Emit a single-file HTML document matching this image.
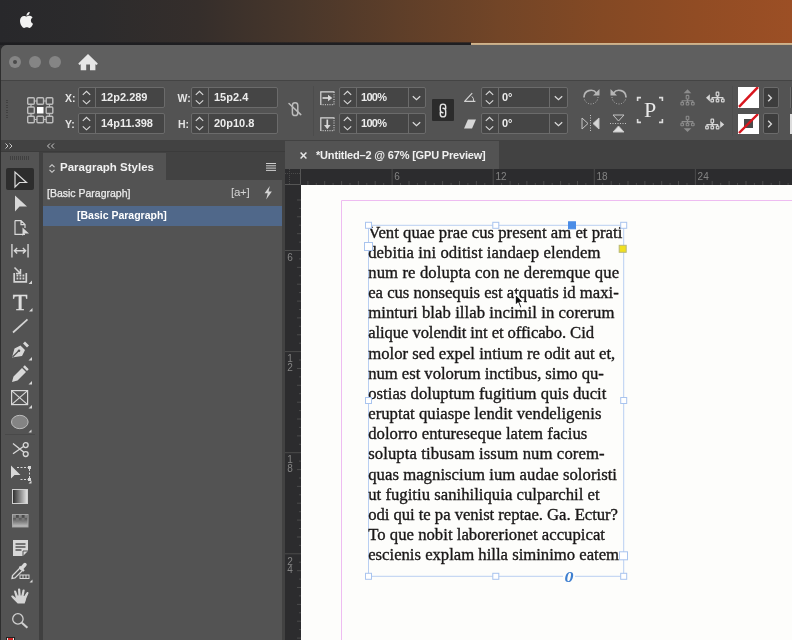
<!DOCTYPE html>
<html><head><meta charset="utf-8">
<style>
*{box-sizing:border-box;margin:0;padding:0}
html,body{width:792px;height:640px;overflow:hidden;background:#2b2b2d;font-family:"Liberation Sans",sans-serif;}
body{position:relative}
.a{position:absolute}
#desk{left:0;top:0;width:792px;height:45px;background:linear-gradient(to right,#28282b 0%,#2c2b2c 12%,#352e2b 25%,#49372b 38%,#5d3e29 50%,#724527 63%,#844924 76%,#914c24 88%,#9c4f25 100%);}
#ln1{left:0;top:42px;width:471px;height:3px;background:linear-gradient(to bottom,rgba(28,28,31,0.3),#1e1e21 34%,#1e1e21)}
#ln2{left:471px;top:43px;width:321px;height:2px;background:linear-gradient(to bottom,#d4b78e,#bfa684)}
#win{left:1px;top:45px;width:791px;height:595px;background:#535353;border-top-left-radius:6px;}
#title{left:1px;top:45px;width:791px;height:35px;background:#5f5f5f;border-top-left-radius:6px}
#ctrlline{left:1px;top:80px;width:791px;height:1px;background:#444}
#ctrl{left:1px;top:81px;width:791px;height:59px;background:#535353}
#strip{left:1px;top:140px;width:284px;height:11px;background:#3d3d3d}
.tl{width:12px;height:12px;border-radius:6px;background:#858585;top:56px}
.fld{position:absolute;height:21px;background:#454545;border:1px solid #6b6b6b;border-radius:2px;}
.fld i{position:absolute;top:0;width:1px;height:19px;background:#6b6b6b}
.fld b{position:absolute;top:0;left:0;color:#ececec;font-size:11px;font-weight:bold;line-height:19px;white-space:nowrap;transform:translateY(0.450px) scaleY(0.940);transform-origin:50% 50%}
.lbl{position:absolute;color:#e4e4e4;font-size:10.500px;font-weight:bold;line-height:21px;white-space:nowrap}
svg{position:absolute;overflow:visible}
</style></head><body><div id="root" style="position:absolute;left:0;top:0;width:792px;height:640px;will-change:transform">
<div id="desk" class="a"></div>
<div id="ln1" class="a"></div><div id="ln2" class="a"></div>
<div id="win" class="a"></div><div class="a" style="left:0;top:48px;width:1px;height:592px;background:#2e2e2e"></div>
<div id="title" class="a"></div>
<div id="ctrlline" class="a"></div>
<div id="ctrl" class="a"></div>
<!--APPLE-->
<!--TITLEBAR-->
<div class="a tl" style="left:9px"></div><div class="a" style="left:13px;top:60px;width:4px;height:4px;border-radius:2px;background:#4a4a4a"></div>
<div class="a tl" style="left:29px"></div>
<div class="a tl" style="left:49px"></div>

<!-- apple logo -->
<svg class="a" style="left:20px;top:12px" width="13" height="16" viewBox="0 0 814 1000"><path fill="#f2f2f2" d="M788.1 340.9c-5.8 4.5-108.2 62.2-108.2 190.5 0 148.4 130.3 200.9 134.2 202.200-.6 3.200-20.700 71.900-68.700 141.900-42.800 61.600-87.500 123.100-155.500 123.100s-85.500-39.500-164-39.500c-76.500 0-103.700 40.800-165.900 40.800s-105.600-57-155.500-127C46.700 790.700 0 663 0 541.800c0-194.400 126.400-297.500 250.800-297.500 66.100 0 121.200 43.400 162.700 43.400 39.500 0 101.100-46 176.300-46 28.500 0 130.900 2.600 198.300 99.200zm-234-181.500c31.100-36.900 53.100-88.100 53.100-139.300 0-7.100-.6-14.300-1.900-20.100-50.600 1.900-110.800 33.700-147.100 75.800-28.500 32.400-55.100 83.600-55.100 135.500 0 7.800 1.300 15.600 1.900 18.100 3.200.6 8.400 1.300 13.600 1.300 45.400 0 102.500-30.400 135.500-71.300z"/></svg>
<!-- home icon -->
<svg class="a" style="left:0;top:0" width="120" height="80" viewBox="0 0 120 80"><path fill="#e6e6e6" d="M88 54 L78.300 63.400 L79.300 64.900 L80.700 64.300 V70.300 H86.200 V64.400 H90 V70.300 H95.400 V64.300 L96.800 64.900 L97.800 63.400 Z"/></svg>
<!-- grip -->
<div class="a" style="left:6px;top:100px;width:2px;height:20px;background:repeating-linear-gradient(to bottom,#404040 0,#404040 1px,transparent 1px,transparent 2.500px)"></div>
<!-- reference point grid -->
<svg class="a" style="left:27px;top:96.700px" width="26.500" height="26.500" viewBox="0 0 26.500 26.500" fill="none" stroke="#bdbdbd" stroke-width="1.400">
<rect x="0.700" y="0.700" width="6.600" height="6.600" rx="1"/><rect x="9.950" y="0.700" width="6.600" height="6.600" rx="1"/><rect x="19.200" y="0.700" width="6.600" height="6.600" rx="1"/>
<rect x="0.700" y="9.950" width="6.600" height="6.600" rx="1"/><rect x="19.200" y="9.950" width="6.600" height="6.600" rx="1"/>
<rect x="0.700" y="19.200" width="6.600" height="6.600" rx="1"/><rect x="9.950" y="19.200" width="6.600" height="6.600" rx="1"/><rect x="19.200" y="19.200" width="6.600" height="6.600" rx="1"/>
<path d="M7.300 4 H10 M16.500 4 H19.200 M7.300 22.500 H10 M16.500 22.500 H19.200 M4 7.300 V10 M4 16.500 V19.200 M22.500 7.300 V10 M22.500 16.500 V19.200" stroke-width="1.200"/>
<rect x="10" y="10" width="6.500" height="6.500" fill="#ffffff" stroke="none"/>
</svg>
<!-- X Y W H -->
<div class="lbl" style="left:65px;top:88px">X:</div>
<div class="lbl" style="left:65px;top:114px">Y:</div>
<div class="lbl" style="left:177.500px;top:88px">W:</div>
<div class="lbl" style="left:178px;top:114px">H:</div>
<div class="fld" style="left:78px;top:87px;width:87px"><i style="left:16px"></i><b style="left:22px">12p2.289</b><svg class="st" width="9" height="15" style="left:3px;top:2px" viewBox="0 0 9 15" fill="none" stroke="#dadada" stroke-width="1.150"><path d="M0.800 4.800 L4.500 1.400 L8.200 4.800 M0.800 10.400 L4.500 13.800 L8.200 10.400"/></svg></div>
<div class="fld" style="left:78px;top:113px;width:87px"><i style="left:16px"></i><b style="left:22px">14p11.398</b><svg class="st" width="9" height="15" style="left:3px;top:2px" viewBox="0 0 9 15" fill="none" stroke="#dadada" stroke-width="1.150"><path d="M0.800 4.800 L4.500 1.400 L8.200 4.800 M0.800 10.400 L4.500 13.800 L8.200 10.400"/></svg></div>
<div class="fld" style="left:191px;top:87px;width:87px"><i style="left:16px"></i><b style="left:22px">15p2.4</b><svg class="st" width="9" height="15" style="left:3px;top:2px" viewBox="0 0 9 15" fill="none" stroke="#dadada" stroke-width="1.150"><path d="M0.800 4.800 L4.500 1.400 L8.200 4.800 M0.800 10.400 L4.500 13.800 L8.200 10.400"/></svg></div>
<div class="fld" style="left:191px;top:113px;width:87px"><i style="left:16px"></i><b style="left:22px">20p10.8</b><svg class="st" width="9" height="15" style="left:3px;top:2px" viewBox="0 0 9 15" fill="none" stroke="#dadada" stroke-width="1.150"><path d="M0.800 4.800 L4.500 1.400 L8.200 4.800 M0.800 10.400 L4.500 13.800 L8.200 10.400"/></svg></div>
<!-- broken chain -->
<svg class="a" style="left:0;top:0" width="340" height="140" viewBox="0 0 340 140" fill="none" stroke="#bcbcbc" stroke-width="1.500" stroke-linecap="round"><rect x="292.400" y="102.800" width="5.400" height="12.800" rx="2.700"/><path d="M289 103.500 L300.800 114.600"/></svg>
<!-- scale icons -->
<svg class="a" style="left:0;top:0" width="340" height="140" viewBox="0 0 340 140" fill="none" stroke="#d8d8d8" stroke-width="1.200"><path d="M320.800 105 V91.900 H334.500"/><path d="M334 92 V104.600 H321" stroke-dasharray="1 1.300" stroke="#c4c4c4"/><path d="M322.500 98 H329" stroke-width="1.700"/><path d="M328 94.800 L332.300 98 L328 101.200 Z" fill="#d8d8d8" stroke="none"/>
<path d="M320.800 131 V117.800 H334.500"/><path d="M334 118 V130.600 H321" stroke-dasharray="1 1.300" stroke="#c4c4c4"/><path d="M327.300 119.500 V126" stroke-width="1.700"/><path d="M324 125 L327.300 129.300 L330.600 125 Z" fill="#d8d8d8" stroke="none"/></svg>
<div class="a" style="left:313px;top:86px;width:1px;height:50px;background:#4c4c4c"></div>
<div class="fld" style="left:339px;top:87px;width:87px"><i style="left:16px"></i><i style="left:68px"></i><b style="left:21px;letter-spacing:-0.700px">100%</b><svg class="st" width="9" height="15" style="left:3px;top:2px" viewBox="0 0 9 15" fill="none" stroke="#dadada" stroke-width="1.150"><path d="M0.800 4.800 L4.500 1.400 L8.200 4.800 M0.800 10.400 L4.500 13.800 L8.200 10.400"/></svg><svg width="9" height="6" style="left:72px;top:7px" viewBox="0 0 9 6" fill="none" stroke="#dadada" stroke-width="1.250"><path d="M0.800 1.200 L4.500 4.700 L8.200 1.200"/></svg></div>
<div class="fld" style="left:339px;top:113px;width:87px"><i style="left:16px"></i><i style="left:68px"></i><b style="left:21px;letter-spacing:-0.700px">100%</b><svg class="st" width="9" height="15" style="left:3px;top:2px" viewBox="0 0 9 15" fill="none" stroke="#dadada" stroke-width="1.150"><path d="M0.800 4.800 L4.500 1.400 L8.200 4.800 M0.800 10.400 L4.500 13.800 L8.200 10.400"/></svg><svg width="9" height="6" style="left:72px;top:7px" viewBox="0 0 9 6" fill="none" stroke="#dadada" stroke-width="1.250"><path d="M0.800 1.200 L4.500 4.700 L8.200 1.200"/></svg></div>
<!-- chain button -->
<div class="a" style="left:432px;top:99px;width:22px;height:22px;background:#2b2b2b;border-radius:1px"></div>
<svg class="a" style="left:0;top:0" width="480" height="140" viewBox="0 0 480 140" fill="none" stroke="#e4e4e4" stroke-width="1.400" stroke-linecap="round"><path d="M445.700 108.800 V106.800 A2.700 2.700 0 0 0 440.300 106.800 V110 A2.700 2.700 0 0 0 443 112.700"/><path d="M440.300 112.200 V114.200 A2.700 2.700 0 0 0 445.700 114.200 V111 A2.700 2.700 0 0 0 443 108.300"/></svg>
<!-- rotation / shear icons -->
<svg class="a" style="left:0;top:0" width="480" height="140" viewBox="0 0 480 140" fill="none" stroke="#d2d2d2" stroke-width="1.200" stroke-linejoin="round"><path d="M472.200 93.200 L464.600 101.300 H475.400"/><path d="M471.900 96.400 A5 5 0 0 1 473.500 101" stroke-width="1"/></svg>
<svg class="a" style="left:464px;top:119px" width="12" height="10" viewBox="0 0 12 10"><path fill="#d6d6d6" d="M4 0.500 H12 L8 9.500 H0 Z"/></svg>
<div class="fld" style="left:481px;top:87px;width:87px"><i style="left:16px"></i><i style="left:67px"></i><b style="left:20px">0°</b><svg class="st" width="9" height="15" style="left:3px;top:2px" viewBox="0 0 9 15" fill="none" stroke="#dadada" stroke-width="1.150"><path d="M0.800 4.800 L4.500 1.400 L8.200 4.800 M0.800 10.400 L4.500 13.800 L8.200 10.400"/></svg><svg width="9" height="6" style="left:72px;top:7px" viewBox="0 0 9 6" fill="none" stroke="#dadada" stroke-width="1.250"><path d="M0.800 1.200 L4.500 4.700 L8.200 1.200"/></svg></div>
<div class="fld" style="left:481px;top:113px;width:87px"><i style="left:16px"></i><i style="left:67px"></i><b style="left:20px">0°</b><svg class="st" width="9" height="15" style="left:3px;top:2px" viewBox="0 0 9 15" fill="none" stroke="#dadada" stroke-width="1.150"><path d="M0.800 4.800 L4.500 1.400 L8.200 4.800 M0.800 10.400 L4.500 13.800 L8.200 10.400"/></svg><svg width="9" height="6" style="left:72px;top:7px" viewBox="0 0 9 6" fill="none" stroke="#dadada" stroke-width="1.250"><path d="M0.800 1.200 L4.500 4.700 L8.200 1.200"/></svg></div>
<!-- rotate cw/ccw -->
<svg class="a" style="left:582px;top:88px" width="18" height="18" viewBox="0 0 18 18" fill="none" stroke="#b6b6b6" stroke-width="1.700"><path d="M14.500 5 A7 7 0 0 0 2 9"/><path d="M2 9 A7 7 0 0 0 16 9" stroke-dasharray="1 1.600" stroke-width="1"/><path d="M17.500 1 V7.500 H11 Z" fill="#b6b6b6" stroke="none"/></svg>
<svg class="a" style="left:610px;top:88px" width="18" height="18" viewBox="0 0 18 18" fill="none" stroke="#b6b6b6" stroke-width="1.700"><path d="M3.500 5 A7 7 0 0 1 16 9"/><path d="M16 9 A7 7 0 0 1 2 9" stroke-dasharray="1 1.600" stroke-width="1"/><path d="M0.500 1 V7.500 H7 Z" fill="#b6b6b6" stroke="none"/></svg>
<!-- flip h / v -->
<svg class="a" style="left:581px;top:115px" width="19" height="17" viewBox="0 0 19 17" fill="none" stroke="#c4c4c4" stroke-width="1"><path d="M1 3 V14 L7 8.500 Z"/><path d="M18 3 V14 L12 8.500 Z" fill="#d6d6d6"/><path d="M9.500 0 V17" stroke-dasharray="1 1.500"/></svg>
<svg class="a" style="left:610px;top:114px" width="17" height="19" viewBox="0 0 17 19" fill="none" stroke="#c4c4c4" stroke-width="1"><path d="M3 1 H14 L8.500 7 Z"/><path d="M3 18 H14 L8.500 12 Z" fill="#e0e0e0"/><path d="M0 9.500 H17" stroke-dasharray="1 1.500"/></svg>
<!-- P brackets -->
<svg class="a" style="left:637px;top:97px" width="26" height="26" viewBox="0 0 26 26" fill="none" stroke="#dcdcdc" stroke-width="1.600"><path d="M0.600 4 V0.600 H4 M22 0.600 H25.400 V4 M25.400 22 V25.400 H22 M4 25.400 H0.600 V22"/></svg>
<div class="a" style="left:641px;top:98px;width:18px;height:24px;font-family:'Liberation Serif',serif;font-size:22px;line-height:24px;color:#e8e8e8;text-align:center">P</div>
<!-- hierarchy icons -->
<svg class="a" style="left:0;top:0" width="792" height="140" viewBox="0 0 792 140"><g fill="none" stroke="#8c8c8c" stroke-width="1.1"><rect x="686.2" y="95.4" width="2.600" height="3.600" rx="0.600"/><path d="M687.5 99.0 V102.4 M682.2 102.4 V100.8 H692.8 V102.4"/><rect x="680.9" y="102.4" width="2.600" height="2.600" rx="0.600"/><rect x="686.2" y="102.4" width="2.600" height="2.600" rx="0.600"/><rect x="691.5" y="102.4" width="2.600" height="2.600" rx="0.600"/></g><path d="M687.500 89.200 L691.300 93.200 H683.700 Z" fill="#8c8c8c"/><g fill="none" stroke="#8c8c8c" stroke-width="1.1"><rect x="686.2" y="116.2" width="2.600" height="3.600" rx="0.600"/><path d="M687.5 119.8 V123.2 M682.2 123.2 V121.6 H692.8 V123.2"/><rect x="680.9" y="123.2" width="2.600" height="2.600" rx="0.600"/><rect x="686.2" y="123.2" width="2.600" height="2.600" rx="0.600"/><rect x="691.5" y="123.2" width="2.600" height="2.600" rx="0.600"/></g><path d="M687.500 132 L691.300 128.200 H683.700 Z" fill="#8c8c8c"/><g fill="none" stroke="#d6d6d6" stroke-width="1.2"><rect x="716.2" y="92.2" width="2.600" height="3.600" rx="0.600"/><path d="M717.5 95.8 V99.2 M712.2 99.2 V97.6 H722.8 V99.2"/><rect x="710.9" y="99.2" width="2.600" height="2.600" rx="0.600"/><rect x="716.2" y="99.2" width="2.600" height="2.600" rx="0.600"/><rect x="721.5" y="99.2" width="2.600" height="2.600" rx="0.600"/></g><path d="M706 97.800 L709.900 94.200 V101.400 Z" fill="#d6d6d6"/><g fill="none" stroke="#d6d6d6" stroke-width="1.2"><rect x="711.0" y="119.2" width="2.600" height="3.600" rx="0.600"/><path d="M712.3 122.8 V126.2 M707.0 126.2 V124.6 H717.6 V126.2"/><rect x="705.7" y="126.2" width="2.600" height="2.600" rx="0.600"/><rect x="711.0" y="126.2" width="2.600" height="2.600" rx="0.600"/><rect x="716.3" y="126.2" width="2.600" height="2.600" rx="0.600"/></g><path d="M724.200 124.400 L720.200 120.900 V127.900 Z" fill="#d6d6d6"/></svg>
<!-- fill / stroke swatches -->
<div class="a" style="left:738px;top:87px;width:21px;height:21px;background:#fff;overflow:hidden"><svg width="21" height="21" viewBox="0 0 21 20" preserveAspectRatio="none" style="left:0;top:0"><path d="M1 19 L20 0" stroke="#d8161e" stroke-width="2.400"/></svg></div>
<div class="a" style="left:763px;top:87px;width:16px;height:21px;background:#3d3d3d;border:1px solid #6b6b6b;border-radius:2px"></div>
<svg class="a" style="left:767px;top:93.500px" width="5.600" height="8" viewBox="0 0 7 10" fill="none" stroke="#d8d8d8" stroke-width="1.700"><path d="M1.500 1 L5.500 5 L1.500 9"/></svg>
<div class="a" style="left:738px;top:114px;width:21px;height:20px;background:#fff;overflow:hidden"><div class="a" style="left:6px;top:5px;width:9px;height:9px;background:#4a4a4a"></div><svg width="21" height="20" viewBox="0 0 21 20" style="left:0;top:0"><path d="M1 19 L20 0" stroke="#d8161e" stroke-width="2.400"/></svg></div>
<div class="a" style="left:763px;top:113px;width:16px;height:21px;background:#3d3d3d;border:1px solid #6b6b6b;border-radius:2px"></div>
<svg class="a" style="left:767px;top:119.500px" width="5.600" height="8" viewBox="0 0 7 10" fill="none" stroke="#d8d8d8" stroke-width="1.700"><path d="M1.500 1 L5.500 5 L1.500 9"/></svg>
<div class="a" style="left:790px;top:87px;width:2px;height:21px;background:#454545;border-left:1px solid #6b6b6b"></div>
<div class="a" style="left:790px;top:114px;width:2px;height:20px;background:#dcdcdc"></div>
<!-- separators -->
<div class="a" style="left:732px;top:86px;width:1px;height:50px;background:#4e4e4e"></div>

<!-- strip chevrons -->
<div class="a" style="left:1px;top:140px;width:791px;height:12px;background:#424242"></div><div class="a" style="left:1px;top:151px;width:284px;height:1px;background:#3b3b3b"></div>
<svg class="a" style="left:5px;top:143px" width="8" height="6" viewBox="0 0 8 6" fill="none" stroke="#c8c8c8" stroke-width="1"><path d="M0.500 0.500 L3 3 L0.500 5.500 M4.500 0.500 L7 3 L4.500 5.500"/></svg>
<svg class="a" style="left:47px;top:143px" width="8" height="6" viewBox="0 0 8 6" fill="none" stroke="#c8c8c8" stroke-width="1"><path d="M3 0.500 L0.500 3 L3 5.500 M7 0.500 L4.500 3 L7 5.500"/></svg>
<!-- toolbar bg -->
<div class="a" style="left:1px;top:152px;width:38px;height:488px;background:#535353"></div>
<div class="a" style="left:39px;top:152px;width:4px;height:488px;background:#404040"></div>
<div class="a" style="left:10px;top:156px;width:20px;height:4px;background:repeating-linear-gradient(to right,#3f3f3f 0,#3f3f3f 1px,#535353 1px,#535353 2px)"></div>
<!-- selection tool (active) -->
<div class="a" style="left:6px;top:168px;width:28px;height:22px;background:#2d2d2d;border-radius:2px"></div>
<svg class="a" style="left:14px;top:171px" width="14" height="17" viewBox="0 0 14 17" fill="none" stroke="#dcdcdc" stroke-width="1.200" stroke-linejoin="miter"><path d="M1 1 V16 L5.500 11.500 H12.500 Z"/></svg>
<!-- direct selection -->
<svg class="a" style="left:14px;top:195px" width="14" height="17" viewBox="0 0 14 17"><path fill="#d8d8d8" d="M1 0.500 V16.500 L5.500 11.500 H13 Z"/></svg>
<!-- page tool -->
<svg class="a" style="left:13.500px;top:219.500px" width="17" height="18" viewBox="0 0 17 18" fill="none" stroke="#d8d8d8" stroke-width="1.200"><path d="M1 0.600 H7 L11 4.600 V8 M11 14.400 H1 V0.600 M7 0.600 V4.600 H11" /><path d="M8.500 7.500 V16 L10.800 13.600 H15 Z" fill="#d8d8d8" stroke="none"/></svg>
<!-- gap tool -->
<svg class="a" style="left:11px;top:244px" width="18" height="13.500" viewBox="0 0 19 14" fill="none" stroke="#d8d8d8" stroke-width="1.400"><path d="M1 0 V14 M18 0 V14 M3.500 7 H15.500 M6.500 4 L3.500 7 L6.500 10 M12.500 4 L15.500 7 L12.500 10"/></svg>
<!-- content collector -->
<svg class="a" style="left:11px;top:265px" width="22" height="20" viewBox="0 0 22 20" fill="none" stroke="#d4d4d4" stroke-width="1.400"><path d="M3.200 8 V16.800 H15.300 V8" stroke-width="1.700"/><path d="M5.500 10.500 H7.300 M8.500 10.500 H10.300 M11.500 10.500 H13.300 M5.500 13.500 H7.300 M8.500 13.500 H10.300 M11.500 13.500 H13.300" stroke-width="1.800"/><path d="M3.500 2.500 L9 8 M9.500 4 V8.500 H5" stroke-width="1.500"/><path d="M21 15.500 V19 H17.500 Z" fill="#d4d4d4" stroke="none"/></svg>
<!-- type tool -->
<div class="a" style="left:10px;top:291px;width:20px;height:22px;font-family:'Liberation Serif',serif;font-size:24px;line-height:22px;color:#dedede;text-align:center;-webkit-text-stroke:0.500px #dedede">T</div>
<svg class="a" style="left:29px;top:308px" width="3.500" height="3.500" viewBox="0 0 3 3"><path fill="#d8d8d8" d="M3 0 V3 H0 Z"/></svg>
<!-- line tool -->
<svg class="a" style="left:0;top:0" width="40" height="340" viewBox="0 0 40 340" stroke="#d4d4d4" stroke-width="1.700"><path d="M13 332.500 L27.500 319.300"/></svg>
<!-- pen tool -->
<svg class="a" style="left:11px;top:341px" width="20" height="20" viewBox="0 0 20 20"><path fill="#d8d8d8" d="M1 16.500 L3.500 7.500 L9.500 4.500 L14 9 L11 15 Z M12 2.500 L14 0.500 L18 4.500 L16 6.500 Z"/><path d="M1.500 16 L7.500 10" stroke="#535353" stroke-width="1.200"/><circle cx="8" cy="9.700" r="1.300" fill="#535353"/><path fill="#d8d8d8" d="M21 16 V19.500 H17.500 Z"/></svg>
<!-- pencil tool -->
<svg class="a" style="left:11px;top:365px" width="20" height="20" viewBox="0 0 20 20"><path fill="#d8d8d8" d="M1 17 L2.500 11.500 L11 3 L15 7 L6.500 15.500 Z M12 2 L13.800 0.300 L17.700 4.200 L16 6 Z"/><path fill="#d8d8d8" d="M21 16 V19.500 H17.500 Z"/></svg>
<!-- rectangle frame -->
<svg class="a" style="left:11px;top:390px" width="20" height="19" viewBox="0 0 20 19" fill="none" stroke="#d8d8d8" stroke-width="1.200"><rect x="0.600" y="0.600" width="16" height="14"/><path d="M0.600 0.600 L16.600 14.600 M16.600 0.600 L0.600 14.600"/><path d="M21 15 V18.500 H17.500 Z" fill="#d8d8d8" stroke="none"/></svg>
<!-- ellipse -->
<svg class="a" style="left:10px;top:414px" width="22" height="19" viewBox="0 0 22 19"><ellipse cx="9.800" cy="8" rx="8.300" ry="6.700" fill="#848484" stroke="#bdbdbd" stroke-width="1"/><path fill="#d8d8d8" d="M21.500 15.500 V18.500 H18.500 Z"/></svg>
<!-- scissors -->
<svg class="a" style="left:11.500px;top:441.500px" width="18" height="16" viewBox="0 0 18 17" fill="none" stroke="#d8d8d8" stroke-width="1.400"><path d="M0.500 1.500 L12 11 M0.500 12.500 L12 4.500"/><circle cx="14" cy="3.300" r="2.600"/><circle cx="14" cy="12.800" r="2.600"/></svg>
<!-- free transform -->
<svg class="a" style="left:10px;top:464.500px" width="22" height="19" viewBox="0 0 22 19" fill="none" stroke="#d8d8d8" stroke-width="1"><path d="M7 2.500 H19.500 V14.500 H9" stroke-dasharray="2 1.500"/><rect x="18" y="1" width="3" height="3" fill="#d8d8d8" stroke="none"/><rect x="18" y="13" width="3" height="3" fill="#d8d8d8" stroke="none"/><path d="M1 0.500 V13.500 L4.500 10 H10.500 Z" fill="#d8d8d8" stroke="none"/><path fill="#d8d8d8" stroke="none" d="M21.500 15.500 V18.500 H18.500 Z"/></svg>
<!-- gradient swatch -->
<svg class="a" style="left:12px;top:489px" width="16" height="15" viewBox="0 0 16 15"><defs><linearGradient id="gs" x1="0" x2="1" y1="0" y2="0"><stop offset="0" stop-color="#2a2a2a"/><stop offset="1" stop-color="#e6e6e6"/></linearGradient></defs><rect x="0.500" y="0.500" width="15" height="14" fill="url(#gs)" stroke="#d0d0d0" stroke-width="1"/></svg>
<!-- gradient feather -->
<svg class="a" style="left:12px;top:514px" width="16.500" height="13.500" viewBox="0 0 16 13"><defs><linearGradient id="gf" x1="0" x2="0" y1="0" y2="1"><stop offset="0" stop-color="#3c3c3c"/><stop offset="0.450" stop-color="#6a6a6a"/><stop offset="1" stop-color="#c4c4c4"/></linearGradient><linearGradient id="gf2" x1="0" x2="0" y1="0" y2="1"><stop offset="0" stop-color="#8a8a8a"/><stop offset="1" stop-color="#8a8a8a" stop-opacity="0"/></linearGradient></defs><rect x="0.500" y="0.500" width="15" height="12" fill="url(#gf)" stroke="#a8a8a8" stroke-width="1"/><path d="M1 1h2.800v2.800H1zM6.600 1h2.800v2.800H6.600zM12.200 1H15v2.800h-2.800zM3.800 3.800h2.800v2.800H3.800zM9.400 3.800h2.800v2.800H9.400zM1 6.600h2.800v2.800H1zM6.600 6.600h2.800v2.800H6.600zM12.200 6.600H15v2.800h-2.800z" fill="url(#gf2)"/></svg>
<!-- note tool -->
<svg class="a" style="left:13px;top:540px" width="15" height="16" viewBox="0 0 15 16"><path fill="#d8d8d8" d="M0 0 H15 V11 L10 16 H0 Z"/><path d="M2.500 4 H12.500 M2.500 7 H12.500 M2.500 10 H8.500" stroke="#535353" stroke-width="1.300"/><path d="M10 16 V11 H15" fill="none" stroke="#535353" stroke-width="1"/></svg>
<!-- eyedropper -->
<svg class="a" style="left:11px;top:563px" width="22" height="22" viewBox="0 0 22 22" fill="none" stroke="#d8d8d8" stroke-width="1.300"><path d="M1 15.500 L1.500 12.500 L9 5 L11.500 7.500 L4 15 Z"/><path d="M8.500 3.500 L13 8" stroke-width="2"/><path d="M10.500 5.500 L14 1.500" stroke-width="3.500" stroke-linecap="round"/><rect x="9" y="12" width="9" height="3.500" stroke-width="1"/><path d="M12 12 V15.500 M15 12 V15.500" stroke-width="1"/><path fill="#d8d8d8" stroke="none" d="M21.500 16.500 V19.500 H18.500 Z"/></svg>
<!-- hand -->
<svg class="a" style="left:11px;top:588px" width="18.500" height="16" viewBox="0 0 18 19" preserveAspectRatio="none"><path fill="#d4d4d4" d="M6.500 18.500 C4.500 15.500 1.500 13 0.300 10.500 C-0.200 9.200 1.500 8.500 2.500 9.500 L4.800 12 L3 4.500 C2.600 3 4.600 2.400 5 4 L6.500 9 H7.200 L6.800 1.800 C6.700 0.200 8.900 0.100 9 1.700 L9.400 9 H10.100 L11.200 2.600 C11.500 1.100 13.600 1.500 13.300 3 L12.300 9.500 H13 L15 5.500 C15.700 4.100 17.600 5 16.900 6.400 L14.800 12.500 C14.500 15 13.800 16.500 13.300 18.500 Z"/></svg>
<!-- zoom -->
<svg class="a" style="left:11px;top:612px" width="19" height="19" viewBox="0 0 19 19" fill="none" stroke="#d0d0d0"><circle cx="6.900" cy="6.900" r="5.200" stroke-width="1.300"/><path d="M10.800 10.800 L16.400 15.800" stroke-width="2.100"/></svg>
<!-- bottom fill indicator -->
<div class="a" style="left:6px;top:637px;width:9px;height:3px;background:#e8e8e8;border:1px solid #222;border-bottom:0"></div>
<div class="a" style="left:8px;top:638px;width:5px;height:2px;background:#c22"></div>
<div class="a" style="left:5px;top:434px;width:30px;height:1px;background:#494949"></div>

<!-- panel -->
<div class="a" style="left:43px;top:152px;width:239px;height:488px;background:#535353"></div>
<div class="a" style="left:43px;top:152px;width:239px;height:28px;background:#424242"></div>
<div class="a" style="left:43px;top:153px;width:123px;height:27px;background:#535353"></div>
<div class="a" style="left:282px;top:152px;width:3px;height:488px;background:#424242"></div>
<svg class="a" style="left:48.800px;top:163.500px" width="6" height="9" viewBox="0 0 6 9" fill="none" stroke="#d0d0d0" stroke-width="1.100"><path d="M0.500 3.200 L3 0.700 L5.500 3.200 M0.500 5.800 L3 8.300 L5.500 5.800"/></svg>
<div class="a" style="left:60px;top:159px;font-size:11.500px;font-weight:bold;color:#f0f0f0;line-height:17px;white-space:nowrap" id="pst">Paragraph Styles</div>
<svg class="a" style="left:266px;top:163px" width="10" height="8" viewBox="0 0 10 8" stroke="#cfcfcf" stroke-width="1"><path d="M0 0.500 H10 M0 2.800 H10 M0 5.100 H10 M0 7.400 H10"/></svg>
<div class="a" style="left:47px;top:186px;font-size:10.500px;color:#ececec;line-height:15px;white-space:nowrap;-webkit-text-stroke:0.250px #ececec" id="bp1">[Basic Paragraph]</div>
<div class="a" style="left:231px;top:185px;font-size:11.500px;color:#d4d4d4;line-height:15px;white-space:nowrap;letter-spacing:-0.300px" id="aplus">[a+]</div>
<svg class="a" style="left:264px;top:186px" width="8.500" height="13.500" viewBox="0 0 8 13"><path fill="#d4d4d4" d="M5.500 0 L0.500 7 H3.500 L2 13 L7.500 5.200 H4.300 Z"/></svg>
<div class="a" style="left:43px;top:206px;width:239px;height:20px;background:#50688a"></div>
<div class="a" style="left:77px;top:208px;font-size:10.500px;font-weight:bold;color:#fff;line-height:15px;white-space:nowrap" id="bp2">[Basic Paragraph]</div>

<!-- doc area -->
<div class="a" style="left:285px;top:141px;width:507px;height:28px;background:#424242"></div>
<div class="a" style="left:285px;top:141px;width:214px;height:28px;background:#535353"></div>
<svg class="a" style="left:299.500px;top:151.500px" width="7" height="7" viewBox="0 0 6 6" stroke="#e6e6e6" stroke-width="1.300"><path d="M0.500 0.500 L5.500 5.500 M5.500 0.500 L0.500 5.500"/></svg>
<div class="a" id="tabt" style="left:316px;top:147px;font-size:11px;font-weight:bold;color:#f0f0f0;line-height:16px;white-space:nowrap;letter-spacing:-0.180px">*Untitled–2 @ 67% [GPU Preview]</div>
<div class="a" style="left:285px;top:169px;width:507px;height:16px;background:#2c2c2e"></div>
<div class="a" style="left:285px;top:185px;width:16px;height:455px;background:#2c2c2e"></div>
<div class="a" style="left:301px;top:185px;width:491px;height:455px;background:#fdfdfb"></div>
<svg class="a" style="left:0;top:0" width="792" height="640" viewBox="0 0 792 640" fill="none">
<path d="M300.500 169 V185 M285 184.500 H301" stroke="#555" stroke-width="1"/>
<path d="M289.500 169 V185 M285 173.500 H301" stroke="#4a4a4a" stroke-width="1" stroke-dasharray="1 1"/>
<path d="M307.9 181 V185 M316.3 183 V185 M324.7 181 V185 M333.1 183 V185 M341.6 181 V185 M350.0 183 V185 M358.4 181 V185 M366.8 183 V185 M375.2 181 V185 M383.7 183 V185 M392.1 169 V185 M400.5 183 V185 M409.0 181 V185 M417.4 183 V185 M425.8 181 V185 M434.2 183 V185 M442.6 181 V185 M451.1 183 V185 M459.5 181 V185 M467.9 183 V185 M476.4 181 V185 M484.8 183 V185 M493.2 169 V185 M501.6 183 V185 M510.1 181 V185 M518.5 183 V185 M526.9 181 V185 M535.3 183 V185 M543.8 181 V185 M552.2 183 V185 M560.6 181 V185 M569.0 183 V185 M577.5 181 V185 M585.9 183 V185 M594.3 169 V185 M602.7 183 V185 M611.2 181 V185 M619.6 183 V185 M628.0 181 V185 M636.4 183 V185 M644.9 181 V185 M653.3 183 V185 M661.7 181 V185 M670.1 183 V185 M678.5 181 V185 M687.0 183 V185 M695.4 169 V185 M703.8 183 V185 M712.2 181 V185 M720.7 183 V185 M729.1 181 V185 M737.5 183 V185 M746.0 181 V185 M754.4 183 V185 M762.8 181 V185 M771.2 183 V185 M779.7 181 V185 M788.1 183 V185 M796.5 169 V185" stroke="#4c4c4c" stroke-width="1"/>
<path d="M297 200.0 H301 M299 208.4 H301 M297 216.8 H301 M299 225.2 H301 M297 233.7 H301 M299 242.1 H301 M285 250.5 H301 M299 258.9 H301 M297 267.4 H301 M299 275.8 H301 M297 284.2 H301 M299 292.6 H301 M297 301.1 H301 M299 309.5 H301 M297 317.9 H301 M299 326.3 H301 M297 334.8 H301 M299 343.2 H301 M285 351.6 H301 M299 360.0 H301 M297 368.5 H301 M299 376.9 H301 M297 385.3 H301 M299 393.7 H301 M297 402.2 H301 M299 410.6 H301 M297 419.0 H301 M299 427.4 H301 M297 435.9 H301 M299 444.3 H301 M285 452.7 H301 M299 461.1 H301 M297 469.6 H301 M299 478.0 H301 M297 486.4 H301 M299 494.8 H301 M297 503.2 H301 M299 511.7 H301 M297 520.1 H301 M299 528.5 H301 M297 537.0 H301 M299 545.4 H301 M285 553.8 H301 M299 562.2 H301 M297 570.7 H301 M299 579.1 H301 M297 587.5 H301 M299 595.9 H301 M297 604.4 H301 M299 612.8 H301 M297 621.2 H301 M299 629.6 H301 M297 638.1 H301 M285 654.9 H301" stroke="#4c4c4c" stroke-width="1"/>
<g font-family="Liberation Sans, sans-serif" font-size="10" fill="#838383">
<text x="394.3" y="180">6</text>
<text x="495.4" y="180">12</text>
<text x="596.5" y="180">18</text>
<text x="697.6" y="180">24</text>
<text x="287.300" y="261.2">6</text>
<text x="287.300" y="362.3">1</text>
<text x="287.300" y="371.0">2</text>
<text x="287.300" y="463.4">1</text>
<text x="287.300" y="472.1">8</text>
<text x="287.300" y="564.5">2</text>
<text x="287.300" y="573.2">4</text>
</g>
<path d="M341.500 640 V200.500 H792" stroke="#eebcf1" stroke-width="1"/>
<path d="M368.500 225.300 H623.700 V576.300 H368.500 Z" stroke="#b9cff2" stroke-width="1"/>
<g font-family="Liberation Serif, serif" font-size="16.700" fill="#191717" stroke="#191717" stroke-width="0.350">
<text x="368.2" y="237.5" textLength="254.1" lengthAdjust="spacing">Vent quae prae cus present am et prati</text>
<text x="368.2" y="257.7" textLength="232.2" lengthAdjust="spacing">debitia ini oditist iandaep elendem</text>
<text x="368.2" y="277.8" textLength="250.9" lengthAdjust="spacing">num re dolupta con ne deremque que</text>
<text x="368.2" y="298.0" textLength="250.5" lengthAdjust="spacing">ea cus nonsequis est atquatis id maxi-</text>
<text x="368.2" y="318.2" textLength="246.3" lengthAdjust="spacing">minturi blab illab incimil in corerum</text>
<text x="368.2" y="338.4" textLength="225.8" lengthAdjust="spacing">alique volendit int et officabo. Cid</text>
<text x="368.2" y="358.5" textLength="247.0" lengthAdjust="spacing">molor sed expel intium re odit aut et,</text>
<text x="368.2" y="378.7" textLength="235.7" lengthAdjust="spacing">num est volorum inctibus, simo qu-</text>
<text x="368.2" y="398.9" textLength="238.2" lengthAdjust="spacing">ostias doluptum fugitium quis ducit</text>
<text x="368.2" y="419.0" textLength="233.2" lengthAdjust="spacing">eruptat quiaspe lendit vendeligenis</text>
<text x="368.2" y="439.2" textLength="219.1" lengthAdjust="spacing">dolorro entureseque latem facius</text>
<text x="368.2" y="459.4" textLength="236.4" lengthAdjust="spacing">solupta tibusam issum num corem-</text>
<text x="368.2" y="479.5" textLength="248.8" lengthAdjust="spacing">quas magniscium ium audae soloristi</text>
<text x="368.2" y="499.7" textLength="231.5" lengthAdjust="spacing">ut fugitiu sanihiliquia culparchil et</text>
<text x="368.2" y="519.9" textLength="249.8" lengthAdjust="spacing">odi qui te pa venist reptae. Ga. Ectur?</text>
<text x="368.2" y="540.0" textLength="236.8" lengthAdjust="spacing">To que nobit laborerionet accupicat</text>
<text x="368.2" y="560.2" textLength="250.9" lengthAdjust="spacing">escienis explam hilla siminimo eatem</text>
</g>
<rect x="365.5" y="222.3" width="6" height="6" fill="#fff" stroke="#a9c4ee" stroke-width="1"/>
<rect x="492.8" y="222.3" width="6" height="6" fill="#fff" stroke="#a9c4ee" stroke-width="1"/>
<rect x="620.7" y="222.3" width="6" height="6" fill="#fff" stroke="#a9c4ee" stroke-width="1"/>
<rect x="365.5" y="397.5" width="6" height="6" fill="#fff" stroke="#a9c4ee" stroke-width="1"/>
<rect x="620.7" y="397.5" width="6" height="6" fill="#fff" stroke="#a9c4ee" stroke-width="1"/>
<rect x="365.5" y="573.3" width="6" height="6" fill="#fff" stroke="#a9c4ee" stroke-width="1"/>
<rect x="492.8" y="573.3" width="6" height="6" fill="#fff" stroke="#a9c4ee" stroke-width="1"/>
<rect x="620.7" y="573.3" width="6" height="6" fill="#fff" stroke="#a9c4ee" stroke-width="1"/>
<rect x="568.5" y="221.8" width="7" height="7" fill="#4a8ce6" stroke="#4a8ce6" stroke-width="1"/>
<rect x="619.2" y="245.3" width="7" height="7" fill="#f0e020" stroke="#b8b878" stroke-width="1"/>
<rect x="364.5" y="242.5" width="8" height="8" fill="#fff" stroke="#a9c4ee" stroke-width="1"/>
<rect x="619.5" y="551.8" width="8" height="8" fill="#fff" stroke="#a9c4ee" stroke-width="1"/>
<rect x="563" y="571" width="12" height="11" fill="#fdfdfb"/>
<text x="564.600" y="581.500" textLength="9" lengthAdjust="spacingAndGlyphs" font-family="Liberation Serif, serif" font-style="italic" font-weight="bold" font-size="14" fill="#3e7fd0">0</text>
<path d="M515.200 293.800 V305.600 L518 303 L520.100 308.300 L522.200 307.400 L520 302.400 H523.600 Z" fill="#111" stroke="#fff" stroke-width="1.200" stroke-linejoin="round"/>
</svg>

</div></body></html>
